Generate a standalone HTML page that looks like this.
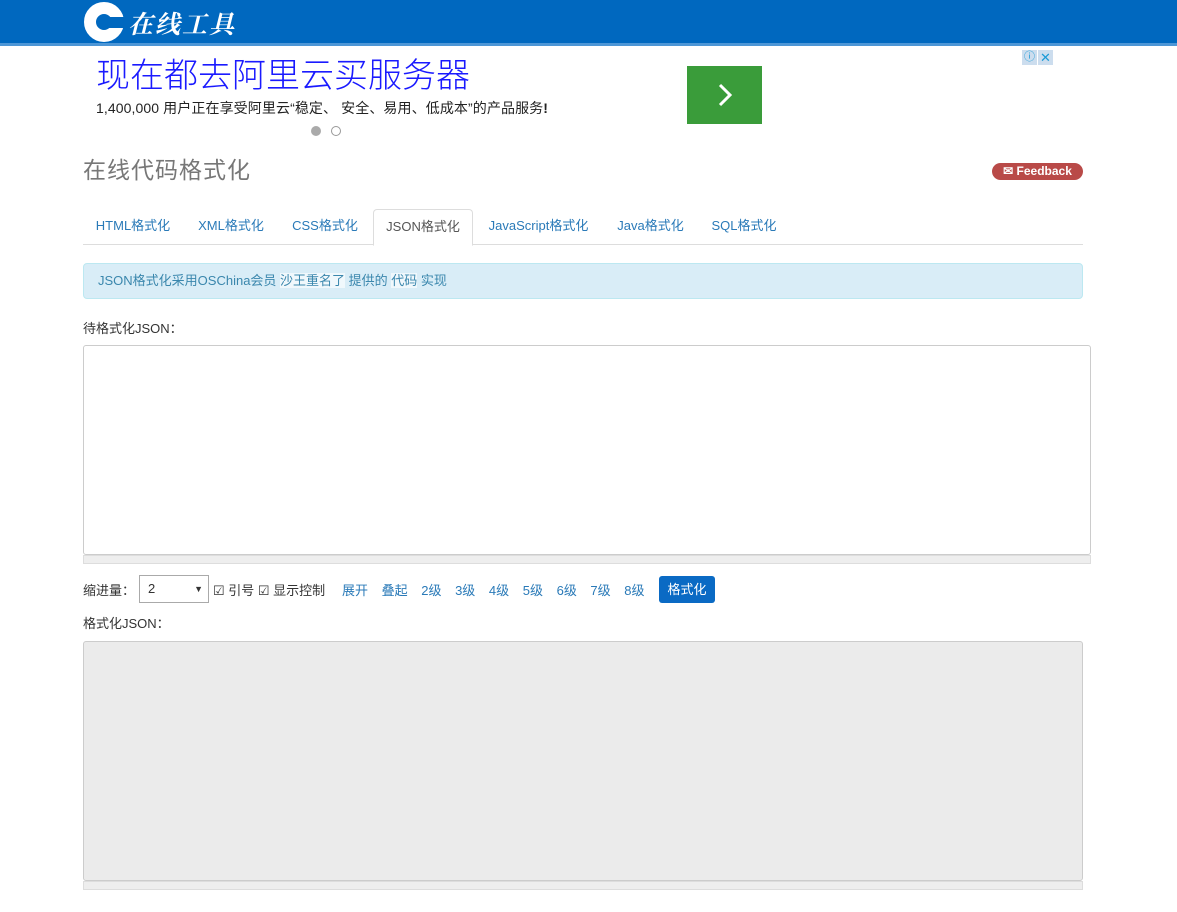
<!DOCTYPE html>
<html><head><meta charset="utf-8"><style>
*{box-sizing:border-box;margin:0;padding:0}
body{width:1177px;height:912px;background:#fff;font-family:"Liberation Sans","Noto Sans CJK SC",sans-serif;font-size:13px;color:#333;position:relative;overflow:hidden}
.hdr{position:absolute;left:0;top:0;width:1177px;height:46px;background:#0068bf;border-bottom:3px solid #4d96d6}
.abs{position:absolute}
a{color:#2a7ab8;text-decoration:none}
.tab{position:absolute;top:209px;height:36px;line-height:34px;font-size:13px;color:#2a7ab8;text-align:center}
</style></head><body>
<div class="hdr">
<svg class="abs" style="left:84px;top:2px" width="42" height="42" viewBox="0 0 42 42"><circle cx="20" cy="20" r="14" fill="none" stroke="#fff" stroke-width="12"/><rect x="25" y="15" width="18" height="11" fill="#0068bf"/></svg>
<div class="abs" style="left:128px;top:5px;color:#fff;font-size:25px;font-weight:bold;font-style:italic;font-family:'Noto Serif CJK SC',serif;letter-spacing:2px">在线工具</div>
</div>
<div class="abs" style="left:96px;top:48px;font-size:34px;color:#1a1aff;font-family:'Noto Sans CJK SC',sans-serif;font-weight:300">现在都去阿里云买服务器</div>
<div class="abs" style="left:96px;top:98px;font-size:14px;color:#222;letter-spacing:0.1px">1,400,000 用户正在享受阿里云“稳定、 安全、易用、低成本”的产品服务<b>!</b></div>
<div class="abs" style="left:311px;top:126px;width:10px;height:10px;border-radius:50%;background:#aaa"></div>
<div class="abs" style="left:331px;top:126px;width:10px;height:10px;border-radius:50%;border:1px solid #999"></div>
<div class="abs" style="left:687px;top:66px;width:75px;height:58px;background:#3a9c3a"><svg width="75" height="58"><path d="M33 19 L43 29 L33 39" fill="none" stroke="#fff" stroke-width="3"/></svg></div>
<div class="abs" style="left:1022px;top:50px;width:15px;height:15px;background:#cde;color:#1a9ad6;font-size:11px;text-align:center;line-height:15px">ⓘ</div>
<div class="abs" style="left:1038px;top:50px;width:15px;height:15px;background:#cde;color:#1a9ad6;font-size:13px;text-align:center;line-height:15px">✕</div>
<div class="abs" style="left:83px;top:151px;font-size:23px;color:#777;letter-spacing:1px">在线代码格式化</div>
<div class="abs" style="left:992px;top:163px;width:91px;height:17px;border-radius:9px;background:#b94a48;color:#fff;font-size:12px;font-weight:bold;line-height:17px;text-align:center">✉ Feedback</div>
<div class="abs" style="left:83px;top:244px;width:1000px;border-top:1px solid #ddd"></div>
<div class="tab" style="left:83px;width:100px">HTML格式化</div>
<div class="tab" style="left:185px;width:92px">XML格式化</div>
<div class="tab" style="left:280px;width:90px">CSS格式化</div>
<div class="tab" style="left:373px;width:100px;background:#fff;border:1px solid #ddd;border-bottom:1px solid #fff;border-radius:4px 4px 0 0;color:#555;height:37px">JSON格式化</div>
<div class="tab" style="left:476px;width:125px">JavaScript格式化</div>
<div class="tab" style="left:604px;width:93px">Java格式化</div>
<div class="tab" style="left:700px;width:88px">SQL格式化</div>
<div class="abs" style="left:83px;top:263px;width:1000px;height:36px;background:#d9edf7;border:1px solid #bce8f1;border-radius:4px;color:#3a87ad;line-height:34px;padding-left:14px">JSON格式化采用OSChina会员 <span style="background:#f0f8fc">沙王重名了</span> 提供的 <span style="background:#f0f8fc">代码</span> 实现</div>
<div class="abs" style="left:83px;top:318px">待格式化JSON：</div>
<div class="abs" style="left:83px;top:345px;width:1008px;height:210px;border:1px solid #ccc;border-radius:3px"></div>
<div class="abs" style="left:83px;top:555px;width:1008px;height:9px;background:#eee;border:1px solid #ddd"></div>
<div class="abs" style="left:83px;top:580px">缩进量：</div>
<div class="abs" style="left:139px;top:575px;width:70px;height:28px;border:1px solid #aaa;background:#fff;line-height:26px;padding-left:8px">2<span style="position:absolute;right:5px;font-size:9px">▼</span></div>
<div class="abs" style="left:213px;top:580px">☑ 引号 ☑ 显示控制</div>
<div class="abs" style="left:342px;top:580px;color:#2a7ab8;word-spacing:10px">展开 叠起 2级 3级 4级 5级 6级 7级 8级</div>
<div class="abs" style="left:659px;top:576px;width:56px;height:27px;border-radius:3px;background:#0a6ac4;color:#fff;text-align:center;line-height:27px">格式化</div>
<div class="abs" style="left:83px;top:613px">格式化JSON：</div>
<div class="abs" style="left:83px;top:641px;width:1000px;height:240px;background:#ebebeb;border:1px solid #ccc;border-radius:3px"></div>
<div class="abs" style="left:83px;top:881px;width:1000px;height:9px;background:#eee;border:1px solid #ddd"></div>
</body></html>
